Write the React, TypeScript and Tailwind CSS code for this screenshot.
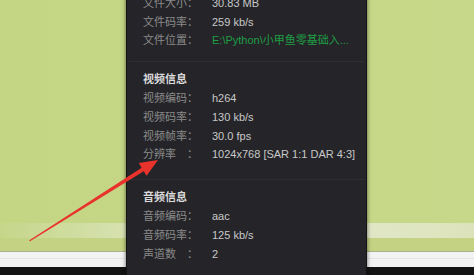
import React from "react"

type Row = { label: string; value: string; green?: boolean }

const fileRows: Row[] = [
  { label: "文件大小", value: "30.83 MB" },
  { label: "文件码率", value: "259 kb/s" },
  { label: "文件位置", value: "E:\\Python\\小甲鱼零基础入...", green: true },
]

const videoRows: Row[] = [
  { label: "视频编码", value: "h264" },
  { label: "视频码率", value: "130 kb/s" },
  { label: "视频帧率", value: "30.0 fps" },
  { label: "分辨率", value: "1024x768 [SAR 1:1 DAR 4:3]" },
]

const audioRows: Row[] = [
  { label: "音频编码", value: "aac" },
  { label: "音频码率", value: "125 kb/s" },
  { label: "声道数", value: "2" },
]

const font = "font-['Liberation_Sans','Noto_Sans_CJK_SC',sans-serif]"

function InfoRow({ label, value, green }: Row) {
  return (
    <div className="flex h-[18.8px] items-center text-[11px] leading-none">
      <span className="w-[44px] shrink-0 text-[#8a8a8a]">{label}</span>
      <span className="w-[25px] shrink-0 text-[#8a8a8a]">：</span>
      <span className={green ? "text-[#1e9e45]" : "text-[#c8c8c8]"}>{value}</span>
    </div>
  )
}

function Title({ text }: { text: string }) {
  return (
    <div className="flex h-[18.8px] items-center text-[11px] font-bold leading-none text-[#dadada]">
      {text}
    </div>
  )
}

export default function App() {
  return (
    <div className={`relative h-[275px] w-[474px] overflow-hidden bg-[#c6d686] ${font}`}>
      {/* video background */}
      <div className="flex h-full flex-col">
        <div className="h-[223px] bg-gradient-to-r from-[#c4d584] to-[#c8d88a]" />
        <div className="h-[15px] bg-gradient-to-r from-[#c6d689] via-[#e6ebd2] to-[#dce3bb]" />
        <div className="h-[13px] bg-[#c3d283]" />
        <div className="h-px bg-[#a9b18c]" />
        <div className="flex h-[15px] flex-col bg-[#f3f3f3]">
          <div className="mt-[6px] h-px bg-[#e4e4e4]" />
        </div>
        <div className="flex-1 bg-[#141414]" />
      </div>

      {/* media info popup */}
      <div className="absolute left-[126px] top-[-8px] h-[290px] w-[241px] border-x border-[#141416] bg-[#252529] pl-[16px] shadow-[0_0_4px_rgba(0,0,0,0.6)]">
        <div className="pt-[2px]">
          {fileRows.map((r) => (
            <InfoRow key={r.label} {...r} />
          ))}
        </div>
        <div className="-ml-[14px] mr-[2px] mt-[11px] h-px bg-[#2e2e33]" />
        <div className="mt-[8px]">
          <Title text="视频信息" />
          {videoRows.map((r) => (
            <InfoRow key={r.label} {...r} />
          ))}
        </div>
        <div className="-ml-[14px] mr-[2px] mt-[15px] h-px bg-[#2e2e33]" />
        <div className="mt-[8px]">
          <Title text="音频信息" />
          {audioRows.map((r) => (
            <InfoRow key={r.label} {...r} />
          ))}
        </div>
      </div>

      {/* red arrow */}
      <svg className="absolute left-0 top-0" width="474" height="275" viewBox="0 0 474 275">
        <polygon
          points="29,240.5 141.65,167.75 138.8,163.1 158,160 146.6,175.8 143.75,171.15 30,241.2"
          fill="#e8332c"
        />
      </svg>
    </div>
  )
}
